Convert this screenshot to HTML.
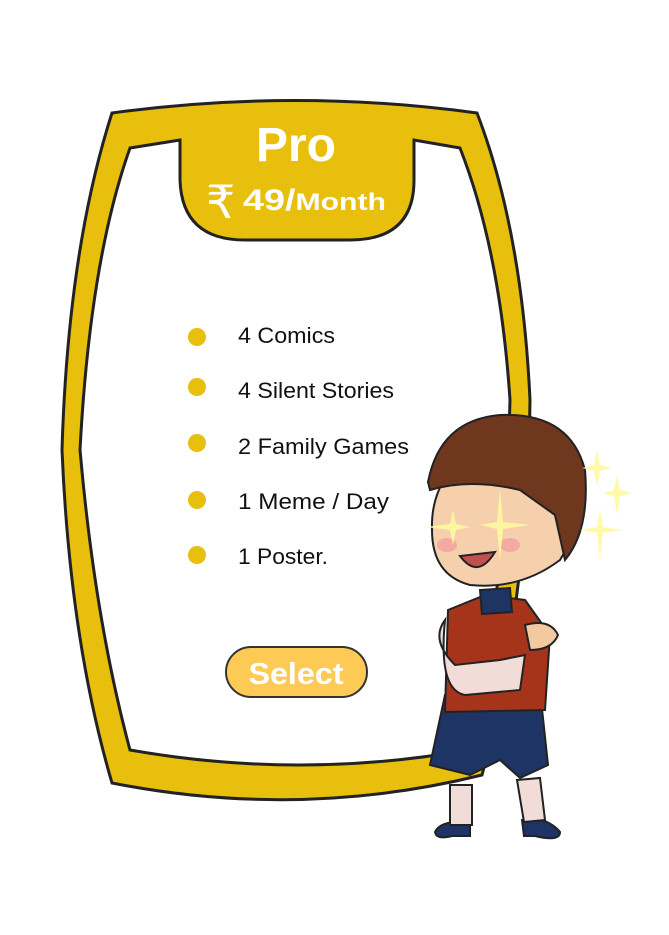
<!DOCTYPE html>
<html><head><meta charset="utf-8"><style>
html,body{margin:0;padding:0;background:#fff;width:669px;height:935px;overflow:hidden}
svg{display:block}
</style></head><body>
<svg width="669" height="935" viewBox="0 0 669 935" xmlns="http://www.w3.org/2000/svg">
<path d="M112,113 Q295,88 477,113 Q522,230 530,400 Q528,600 482,775 Q300,820 112,783 Q70,640 62,450 Q68,250 112,113 Z" fill="#e8bf0d" stroke="#222" stroke-width="3"/>
<path d="M130,148 L180,140 L180,180 Q182,240 245,240 L350,240 Q414,240 414,180 L414,140 L460,148 Q500,250 510,400 Q505,600 468,750 Q300,780 130,750 Q95,620 80,450 Q90,260 130,148 Z" fill="#fff" stroke="#222" stroke-width="3"/>
<text x="296" y="161" text-anchor="middle" font-family="Liberation Sans, sans-serif" font-weight="bold" font-size="48" fill="#fff">Pro</text>
<text x="206" y="218" font-family="Liberation Sans, sans-serif" font-size="46" fill="#fff">₹</text>
<text x="243" y="210" font-family="Liberation Sans, sans-serif" font-weight="bold" font-size="30" fill="#fff" textLength="143" lengthAdjust="spacingAndGlyphs">49/<tspan font-size="24">Month</tspan></text>
<g fill="#e8bf0d"><circle cx="197" cy="337" r="9"/><circle cx="197" cy="387" r="9"/><circle cx="197" cy="443" r="9"/><circle cx="197" cy="500" r="9"/><circle cx="197" cy="555" r="9"/></g>
<g font-family="Liberation Sans, sans-serif" font-size="22" fill="#111">
<text x="238" y="343" textLength="97" lengthAdjust="spacingAndGlyphs">4 Comics</text>
<text x="238" y="398" textLength="156" lengthAdjust="spacingAndGlyphs">4 Silent Stories</text>
<text x="238" y="454" textLength="171" lengthAdjust="spacingAndGlyphs">2 Family Games</text>
<text x="238" y="509" textLength="151" lengthAdjust="spacingAndGlyphs">1 Meme / Day</text>
<text x="238" y="564" textLength="90" lengthAdjust="spacingAndGlyphs">1 Poster.</text>
</g>
<rect x="226" y="647" width="141" height="50" rx="25" fill="#fdcb55" stroke="#333" stroke-width="2"/>
<text x="296" y="684" text-anchor="middle" font-family="Liberation Sans, sans-serif" font-weight="bold" font-size="31" fill="#fff" textLength="95" lengthAdjust="spacingAndGlyphs">Select</text>
<g stroke="#222" stroke-width="2">
<path d="M452,836 Q436,840 435,832 Q440,822 458,822 L470,822 L470,836 Z" fill="#1e3464"/>
<path d="M535,836 Q560,842 560,832 Q552,822 535,818 L522,820 L524,836 Z" fill="#1e3464"/>
<rect x="450" y="785" width="22" height="40" fill="#f2dcd8"/>
<path d="M517,780 L540,778 L545,820 L524,822 Z" fill="#f2dcd8"/>
<path d="M445,695 L540,690 L548,765 L520,778 L500,760 L470,775 L430,765 Z" fill="#1e3464"/>
<path d="M448,610 L485,595 L525,600 L550,635 L545,710 L445,712 Z" fill="#a6341a"/>
<path d="M445,620 Q430,640 455,665 L500,660 L525,655 L520,690 L465,695 Q438,690 445,620 Z" fill="#f2dcd8"/>
<path d="M525,625 Q550,618 558,635 Q552,650 530,650 Z" fill="#f3c9a0"/>
<path d="M480,590 L510,588 L512,612 L482,614 Z" fill="#1e3464"/>
<path d="M490,440 Q540,430 570,470 Q585,520 560,560 Q520,590 470,585 Q432,575 432,530 Q430,470 490,440 Z" fill="#f6d0ad"/>
<path d="M428,482 Q440,420 500,415 Q570,412 585,470 Q590,530 565,560 L555,515 L520,490 Q470,478 430,490 Z" fill="#6e371e"/>
</g>
<ellipse cx="447" cy="545" rx="10" ry="7" fill="#f2a0a0" opacity=".8"/>
<ellipse cx="510" cy="545" rx="10" ry="7" fill="#f2a0a0" opacity=".8"/>
<path d="M460,556 Q478,580 495,552 Z" fill="#c0504d" stroke="#222" stroke-width="2"/>
<g fill="#fffaa0" opacity=".9">
<path d="M453,510 L456,524 L470,527 L456,530 L453,545 L450,530 L425,527 L450,524 Z"/>
<path d="M500,490 L503,522 L530,525 L503,529 L500,560 L497,529 L480,525 L497,522 Z"/>
<path d="M597,450 L600,465 L612,468 L600,471 L597,485 L594,471 L582,468 L594,465 Z"/>
<path d="M617,475 L620,490 L632,493 L620,496 L617,515 L614,496 L603,493 L614,490 Z"/>
<path d="M600,510 L603,527 L622,530 L603,533 L600,560 L597,533 L580,530 L597,527 Z"/>
</g>
</svg>
</body></html>
